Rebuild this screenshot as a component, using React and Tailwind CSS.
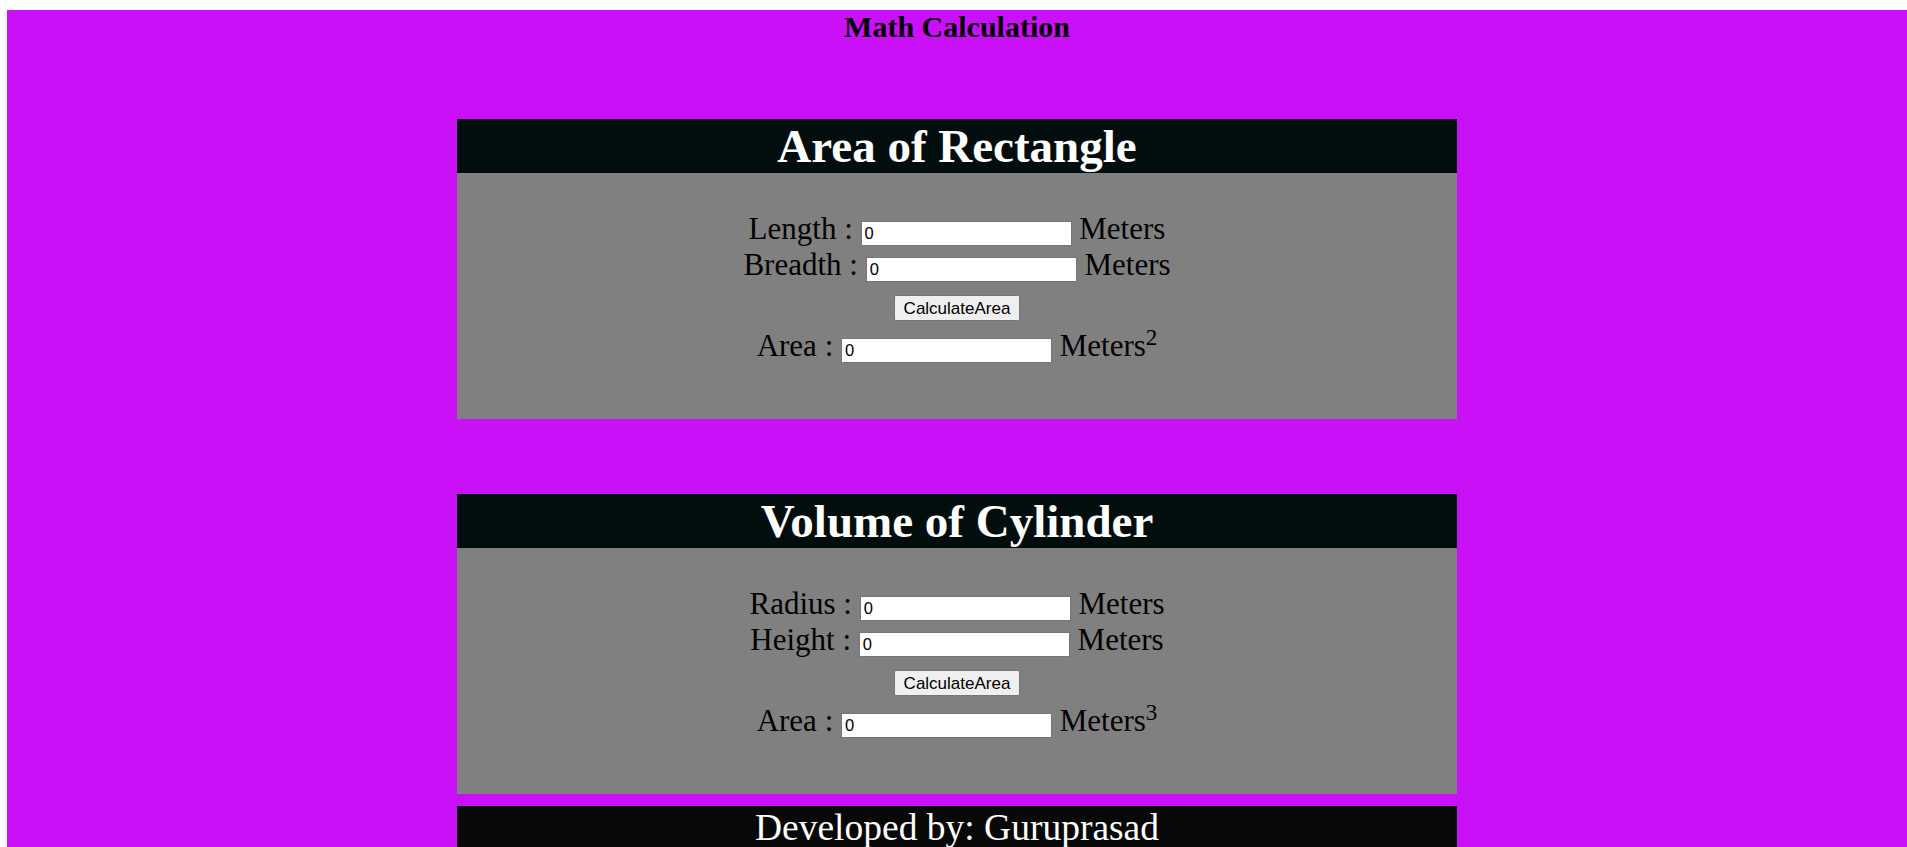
import { useState } from 'react';

const serif = { fontFamily: '"Liberation Serif", "Times New Roman", serif' };

function Field({ label, value, onChange, unit, sup }) {
  return (
    <div className="flex items-baseline justify-center h-[36px] leading-[36px] text-[31px] text-black">
      <span>{label} :&nbsp;</span>
      <input
        type="text"
        value={value}
        onChange={(e) => onChange?.(e.target.value)}
        readOnly={!onChange}
        className="w-[211px] h-[25px] bg-white border border-[#767676] px-[3px] text-[16.5px] leading-[19px] text-black font-['Liberation_Sans',Arial,sans-serif] outline-none"
      />
      <span>
        &nbsp;{unit}
        {sup && <sup className="text-[23px] top-[-0.5em]">{sup}</sup>}
      </span>
    </div>
  );
}

function CalcCard({ title, fields, result, sup, onCalc }) {
  return (
    <div className="w-[1000px] mx-auto">
      <h1 className="h-[54px] bg-[#020e0e] text-white text-[47px] font-bold leading-[54px] text-center">
        {title}
      </h1>
      <div className="h-[246px] bg-[#808080] pt-[38px]">
        {fields.map((f) => (
          <Field key={f.label} label={f.label} value={f.value} onChange={f.set} unit="Meters" />
        ))}
        <div className="flex justify-center mt-[12px]">
          <button
            onClick={onCalc}
            className="h-[26px] px-[9px] bg-[#efefef] border border-[#767676] rounded-[2px] text-[17px] text-black font-['Liberation_Sans',Arial,sans-serif]"
          >
            CalculateArea
          </button>
        </div>
        <div className="mt-[7px]">
          <Field label="Area" value={result} unit="Meters" sup={sup} />
        </div>
      </div>
    </div>
  );
}

export default function App() {
  const [length, setLength] = useState('0');
  const [breadth, setBreadth] = useState('0');
  const [area, setArea] = useState('0');
  const [radius, setRadius] = useState('0');
  const [height, setHeight] = useState('0');
  const [volume, setVolume] = useState('0');

  return (
    <div className="w-full h-[847px] overflow-hidden bg-white pt-[10px] pl-[7px]" style={serif}>
      <div className="w-[1900px] bg-[#c910f7]">
        <h2 className="h-[34px] text-[30px] leading-[34px] font-bold text-center text-black">
          Math Calculation
        </h2>

        <div className="mt-[75px]">
          <CalcCard
            title="Area of Rectangle"
            fields={[
              { label: 'Length', value: length, set: setLength },
              { label: 'Breadth', value: breadth, set: setBreadth },
            ]}
            result={area}
            sup="2"
            onCalc={() => setArea(String(Number(length) * Number(breadth)))}
          />
        </div>

        <div className="mt-[75px]">
          <CalcCard
            title="Volume of Cylinder"
            fields={[
              { label: 'Radius', value: radius, set: setRadius },
              { label: 'Height', value: height, set: setHeight },
            ]}
            result={volume}
            sup="3"
            onCalc={() => setVolume(String(Math.PI * Number(radius) ** 2 * Number(height)))}
          />
        </div>

        <div className="w-[1000px] mx-auto mt-[12px] h-[41px] bg-[#080808] text-white text-[37.5px] leading-[43px] text-center">
          Developed by: Guruprasad
        </div>
      </div>
    </div>
  );
}
